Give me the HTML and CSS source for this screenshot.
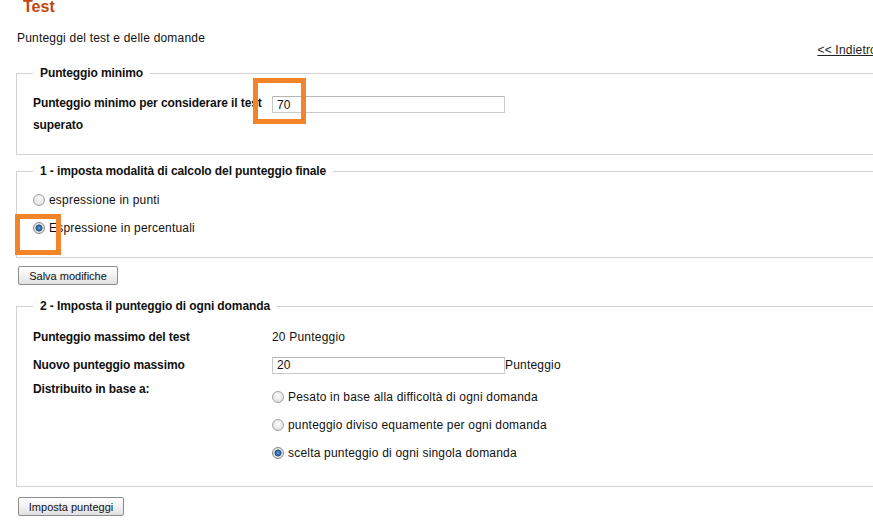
FILE: index.html
```html
<!DOCTYPE html>
<html lang="it">
<head>
<meta charset="utf-8">
<title>Test - Punteggi</title>
<link rel="stylesheet" href="styles.css">
</head>
<body>
<div class="page">
  <h1 class="title">Test</h1>
  <p class="subtitle">Punteggi del test e delle domande</p>
  <div class="back-row"><a class="back" href="#">&lt;&lt; Indietro</a></div>

  <form class="settings">
    <fieldset class="box box-min">
      <legend>Punteggio minimo</legend>
      <div class="row row-min">
        <label class="lbl lbl-wrap" for="minimo">Punteggio minimo per considerare il test superato</label>
        <div class="field">
          <input id="minimo" class="txt" type="text" value="70">
          <span class="mark mark-input"></span>
        </div>
      </div>
    </fieldset>

    <fieldset class="box box-mode">
      <legend>1 - imposta modalità di calcolo del punteggio finale</legend>
      <label class="opt"><input type="radio" name="mode"> espressione in punti</label>
      <label class="opt opt-marked"><input type="radio" name="mode" checked> Espressione in percentuali<span class="mark mark-radio"></span></label>
    </fieldset>

    <button type="button" class="btn btn-save">Salva modifiche</button>

    <fieldset class="box box-score">
      <legend>2 - Imposta il punteggio di ogni domanda</legend>
      <div class="row">
        <span class="lbl">Punteggio massimo del test</span>
        <span class="val">20 Punteggio</span>
      </div>
      <div class="row">
        <label class="lbl" for="nuovo">Nuovo punteggio massimo</label>
        <span class="val"><input id="nuovo" class="txt" type="text" value="20">Punteggio</span>
      </div>
      <div class="row row-dist">
        <span class="lbl">Distribuito in base a:</span>
        <div class="opts">
          <label class="opt"><input type="radio" name="dist"> Pesato in base alla difficoltà di ogni domanda</label>
          <label class="opt"><input type="radio" name="dist"> punteggio diviso equamente per ogni domanda</label>
          <label class="opt"><input type="radio" name="dist" checked> scelta punteggio di ogni singola domanda</label>
        </div>
      </div>
    </fieldset>

    <button type="button" class="btn btn-set">Imposta punteggi</button>
  </form>
</div>
</body>
</html>
```

FILE: styles.css
```css
html, body {
  margin: 0;
  padding: 0;
  background: #fff;
  overflow: hidden;
}

body {
  font-family: "Liberation Sans", Arial, sans-serif;
  font-size: 12px;
  letter-spacing: 0.2px;
  color: #111;
}

.page {
  width: 861px;
  padding-left: 16px;
}

.title {
  margin: -2px 0 0 7px;
  font-size: 16px;
  line-height: 18px;
  font-weight: bold;
  letter-spacing: 0;
  color: #c0470c;
}

.subtitle {
  margin: 15px 0 0 1px;
  line-height: 14px;
}

.back-row {
  display: flex;
  justify-content: flex-end;
  line-height: 14px;
  margin-top: -2px;
}

.back {
  color: #222;
  text-decoration: underline;
}

.settings {
  margin-top: 9px;
}

/* fieldsets */
.box {
  margin: 0;
  border: 1px solid #d2d2d2;
  padding: 0 16px;
  min-width: 0;
}

.box legend {
  padding: 0 7px;
  font-weight: bold;
  letter-spacing: -0.1px;
  line-height: 14px;
}

.box-min {
  padding-top: 12px;
  padding-bottom: 18px;
}

.box-mode {
  margin-top: 9px;
  padding-top: 8px;
  padding-bottom: 15px;
}

.box-score {
  margin-top: 14px;
  padding-top: 10px;
  padding-bottom: 19px;
}

/* label / value rows */
.row {
  display: flex;
  align-items: center;
  height: 28px;
}

.row-min {
  align-items: flex-start;
  height: auto;
}

.lbl {
  flex: 0 0 239px;
  font-weight: bold;
  letter-spacing: -0.1px;
}

.lbl-wrap {
  flex: 0 0 239px;
  line-height: 22px;
  padding-right: 4px;
  box-sizing: border-box;
}

.field {
  position: relative;
  margin-top: 4px;
}

.val {
  display: flex;
  align-items: center;
}

.txt {
  box-sizing: border-box;
  width: 233px;
  height: 17px;
  margin: 0;
  padding: 0 4px;
  border: 1px solid #c9c9c9;
  border-top-color: #b5b5b5;
  font: 12px "Liberation Sans", Arial, sans-serif;
  letter-spacing: 0.2px;
  color: #111;
  background: #fff;
}

.row-dist {
  align-items: flex-start;
  height: auto;
}

.row-dist .lbl {
  line-height: 20px;
}

.opts {
  padding-top: 4px;
}

/* radio options */
.opt {
  position: relative;
  display: flex;
  align-items: center;
  height: 28px;
}

.opt input {
  appearance: none;
  -webkit-appearance: none;
  box-sizing: border-box;
  width: 12px;
  height: 12px;
  margin: 0 4px 0 0;
  border-radius: 50%;
  border: 1px solid #a3a3a3;
  background: radial-gradient(circle at 50% 40%, #fdfdfd 0, #e9e9e9 55%, #cfcfcf 100%);
}

.opt input:checked {
  border-color: #8b8b8b;
  background: radial-gradient(circle at 50% 50%, #6fa7d8 0, #2f6aa3 2px, #1d4f82 3.2px, #e6e6e6 3.8px, #c9c9c9 100%);
}

/* buttons */
.btn {
  display: block;
  margin: 8px 0 0 2px;
  height: 19px;
  padding: 0 9px;
  border: 1px solid #8c8c8c;
  border-radius: 2px;
  background: linear-gradient(#fefefe, #f2f2f2 50%, #e0e0e0);
  font: 11px "Liberation Sans", Arial, sans-serif;
  letter-spacing: 0;
  color: #111;
}

.btn-save {
  width: 100px;
}

.btn-set {
  width: 106px;
  margin-top: 10px;
}

/* highlight frames drawn over the fields */
.mark {
  position: absolute;
  box-sizing: border-box;
  border: 5px solid #f4842a;
  pointer-events: none;
}

.mark-input {
  left: -19px;
  top: -18px;
  width: 53px;
  height: 46px;
}

.mark-radio {
  left: -18px;
  top: 0;
  width: 46px;
  height: 41px;
}
```
